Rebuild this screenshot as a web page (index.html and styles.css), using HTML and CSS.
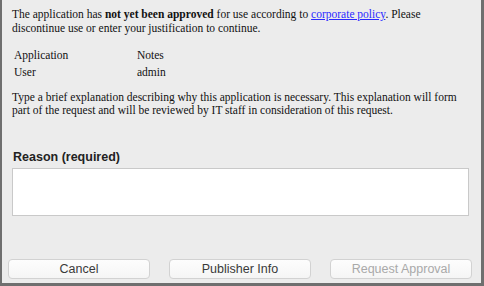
FILE: index.html
```html
<!DOCTYPE html>
<html lang="en">
<head>
  <meta charset="UTF-8">
  <title>Application Approval</title>
  <link rel="stylesheet" href="styles.css">
</head>
<body>

<div class="ventana">
  <div class="contenido">
    <p class="aviso">
      The application has <b>not yet been approved</b> for use according to <a href="#">corporate policy</a>. Please
      discontinue use or enter your justification to continue.
    </p>

    <table class="datos">
      <tr><td>Application</td><td>Notes</td></tr>
      <tr><td>User</td><td>admin</td></tr>
    </table>

    <p class="explicacion">
      Type a brief explanation describing why this application is necessary. This explanation will form
      part of the request and will be reviewed by IT staff in consideration of this request.
    </p>

    <label class="etiqueta" for="reason">Reason (required)</label>
    <textarea id="reason" class="motivo"></textarea>
  </div>

  <div class="botones">
    <button type="button" class="btn">Cancel</button>
    <button type="button" class="btn">Publisher Info</button>
    <button type="button" class="btn" disabled>Request Approval</button>
  </div>
</div>

</body>
</html>
```

FILE: styles.css
```css
* {
  box-sizing: border-box;
  margin: 0;
  padding: 0;
}

body {
  background-color: #ececec;
  width: 484px;
  height: 286px;
  overflow: hidden;
}

.ventana {
  height: 286px;
  border-left: 2px solid #6f6f6f;
  border-right: 3px solid #6f6f6f;
  border-bottom: 3px solid #6f6f6f;
  background-color: #ececec;
  display: flex;
  flex-direction: column;
  justify-content: space-between;
}

.contenido {
  padding: 7px 13px 0 10px;
  font-family: 'Liberation Serif', serif;
  font-size: 11.5px;
  color: #111;
}

.aviso {
  line-height: 14px;
  width: 455px;
}

.aviso a {
  color: #2a2aff;
}

.datos {
  border-collapse: collapse;
  margin: 11px 0 0 2px;
}

.datos td {
  padding: 0;
  height: 17px;
  vertical-align: middle;
}

.datos td:first-child {
  width: 123px;
}

.explicacion {
  margin-top: 11px;
  line-height: 13px;
  width: 456px;
}

.etiqueta {
  display: block;
  margin: 33px 0 0 1px;
  font-family: 'Liberation Sans', sans-serif;
  font-weight: bold;
  font-size: 12.5px;
  color: #222;
}

.motivo {
  display: block;
  width: 457px;
  height: 48px;
  margin: 4px 0 0 0;
  background-color: #fff;
  border: 1px solid #c9c9c9;
  resize: none;
}

.botones {
  display: flex;
  gap: 19px;
  padding: 0 0 4px 6px;
}

.btn {
  width: 142px;
  height: 20px;
  font-family: 'Liberation Sans', sans-serif;
  font-size: 12.5px;
  color: #3a3a3a;
  background: linear-gradient(#fdfdfd, #f5f5f5);
  border: 1px solid #d2d2d2;
  border-radius: 4px;
}

.btn:disabled {
  color: #a9a9a9;
}
```
